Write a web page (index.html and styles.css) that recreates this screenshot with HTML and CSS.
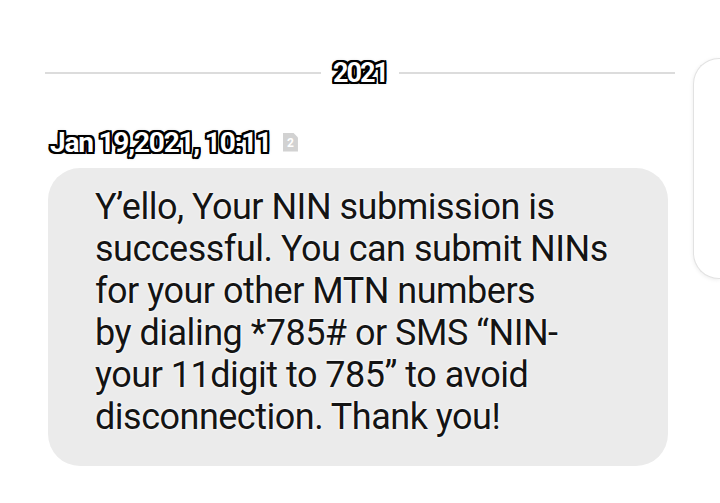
FILE: index.html
```html
<!DOCTYPE html>
<html lang="en">
<head>
    <meta charset="UTF-8">
    <meta name="viewport" content="width=device-width, initial-scale=1.0">
    <title>Messages</title>
    <link rel="stylesheet" href="styles.css">
</head>
<body>
    <div class="screen">
        <div class="thread">
            <!-- Year divider -->
            <div class="year-divider">
                <span class="line"></span>
                <span class="year outlined">2021</span>
                <span class="line"></span>
            </div>

            <!-- Message meta -->
            <div class="msg-meta">
                <span class="msg-date outlined">Jan 19,2021, 10:11</span>
                <span class="sim-icon">2</span>
            </div>

            <!-- Message bubble -->
            <div class="bubble">
                <p class="bubble-text">Y&rsquo;ello, Your NIN submission is<br>
                successful. You can submit NINs<br>
                for your other MTN numbers<br>
                by dialing *785# or SMS &ldquo;NIN-<br>
                your 11digit to 785&rdquo; to avoid<br>
                disconnection. Thank you!</p>
            </div>
        </div>

        <div class="side-card"></div>
    </div>
</body>
</html>
```

FILE: styles.css
```css
:root {
    --bubble: #ebebeb;
    --divider: #dcdcdc;
    --ink: #141414;
}

body {
    margin: 0;
    padding: 0;
    background: #fff;
    font-family: Roboto, "Noto Sans", sans-serif;
    overflow: hidden;
}

.screen {
    display: flex;
    width: 720px;
    height: 503px;
}

.thread {
    width: 648px;
    flex-shrink: 0;
    padding: 58px 0 0 45px;
}

.year-divider {
    display: flex;
    align-items: center;
    gap: 12px;
    width: 630px;
    height: 30px;
}

.line {
    flex: 1;
    height: 1.5px;
    background-color: var(--divider);
}

.outlined {
    color: #fff;
    font-weight: 700;
    text-shadow:
        -2px 0 0 #000, 2px 0 0 #000, 0 -2px 0 #000, 0 2px 0 #000,
        -2px -2px 0 #000, 2px 2px 0 #000, -2px 2px 0 #000, 2px -2px 0 #000,
        -1px -2px 0 #000, 1px 2px 0 #000, -2px 1px 0 #000, 2px -1px 0 #000,
        0 0 4px rgba(0, 0, 0, 0.4);
}

.year {
    font-size: 27px;
    line-height: 30px;
    letter-spacing: -2px;
}

.msg-meta {
    display: flex;
    align-items: center;
    margin: 39px 0 0 5px;
    height: 32px;
}

.msg-date {
    font-size: 28px;
    line-height: 32px;
    letter-spacing: -1.2px;
}

.sim-icon {
    width: 15px;
    height: 19px;
    margin: 0 0 2px 12px;
    background-color: #d2d2d2;
    color: #fff;
    font-size: 12px;
    font-weight: 700;
    line-height: 21px;
    text-align: center;
    clip-path: polygon(0 0, 68% 0, 100% 26%, 100% 100%, 0 100%);
}

.bubble {
    width: 620px;
    margin: 9px 0 0 3px;
    padding: 18px 0 28px 47px;
    box-sizing: border-box;
    background-color: var(--bubble);
    border-radius: 32px;
}

.bubble-text {
    margin: 0;
    color: var(--ink);
    font-size: 36px;
    line-height: 42px;
    letter-spacing: -0.5px;
    white-space: nowrap;
    text-shadow: 0 0 3px #fff, 0 0 2px #fff;
}

.side-card {
    flex-shrink: 0;
    width: 26px;
    height: 219px;
    margin-top: 58px;
    background: #fff;
    border: 1px solid #e2e2e2;
    border-right: none;
    border-radius: 26px 0 0 26px;
    box-shadow: 0 1px 4px rgba(0, 0, 0, 0.08);
}
```
